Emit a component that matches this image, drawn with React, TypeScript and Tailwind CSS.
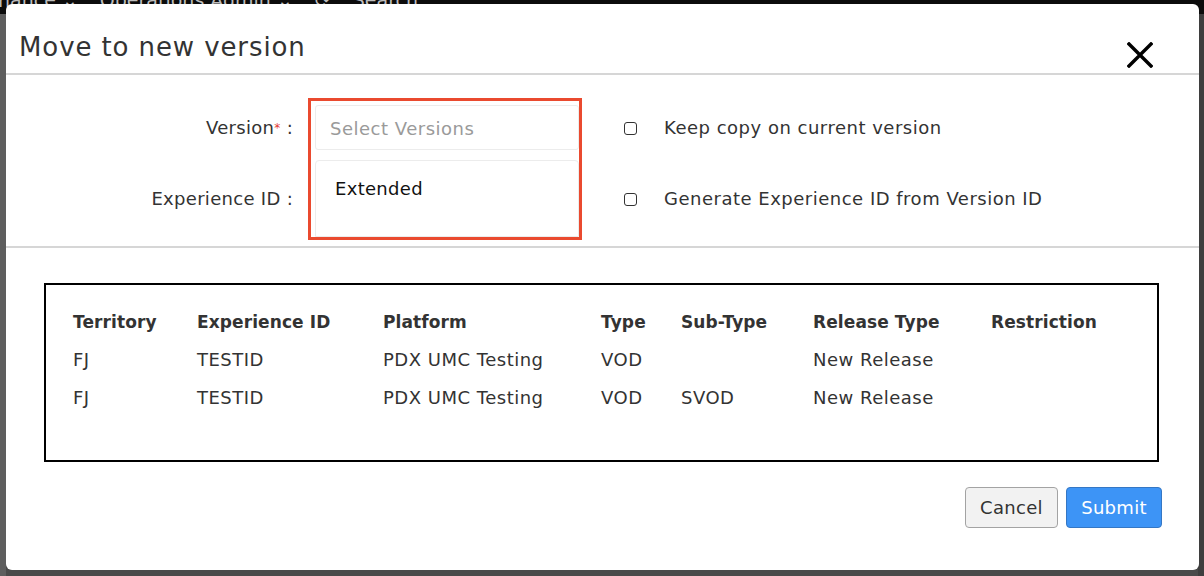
import React from "react";

const font = { fontFamily: '"DejaVu Sans", "Open Sans", sans-serif' };

function Checkbox() {
  return <span className="inline-block w-[13px] h-[13px] border-[1.5px] border-[#333] rounded-[3px] bg-white" />;
}

const cols = ["w-[124px]", "w-[186px]", "w-[218px]", "w-[80px]", "w-[132px]", "w-[178px]", "flex-1"];
const header = ["Territory", "Experience ID", "Platform", "Type", "Sub-Type", "Release Type", "Restriction"];
const rows = [
  ["FJ", "TESTID", "PDX UMC Testing", "VOD", "", "New Release", ""],
  ["FJ", "TESTID", "PDX UMC Testing", "VOD", "SVOD", "New Release", ""],
];

export default function App() {
  return (
    <div className="relative w-[1204px] h-[576px] overflow-hidden bg-[#555555] flex flex-col" style={font}>
      {/* background page */}
      <div className="h-[14px] bg-[#0c0c0c] overflow-hidden shrink-0">
        <div className="-mt-[11px] flex items-center gap-[22px] text-[19px] leading-[22px] text-[#bdbdbd] whitespace-nowrap -ml-[2px]">
          <span>nance ⌄</span>
          <span>Operations Admin ⌄</span>
          <span>⟳</span>
          <span>Search</span>
        </div>
      </div>
      <div className="flex-1 flex">
        <div className="w-[6px] bg-[#5e5e5e]" />
        <div className="flex-1 bg-[#4a4a4a]" />
        <div className="w-[6px] bg-[#3e3e3e]" />
      </div>

      {/* modal */}
      <div className="absolute left-[6px] top-[4px] w-[1193px] h-[566px] bg-white rounded-[6px] flex flex-col text-[#333]">
        <div className="h-[71px] border-b-2 border-[#d6d6d6] flex items-start justify-between pl-[13px] pr-[46px] shrink-0">
          <h2 className="mt-[27px] text-[26px] leading-[32px] text-[#333] tracking-[0.9px]">Move to new version</h2>
          <svg className="mt-[38px]" width="26" height="26" viewBox="0 0 26 26">
            <path d="M2 2 L24 24 M24 2 L2 24" stroke="#000" strokeWidth="3.4" strokeLinecap="square" />
          </svg>
        </div>

        <div className="h-[173px] border-b-2 border-[#d6d6d6] flex shrink-0">
          <div className="w-[287px] flex flex-col items-end text-[18px] leading-[24px] text-[#333] tracking-[0.3px]">
            <div className="mt-[41px]">
              Version<span className="text-[#e53935] text-[12px] align-top">*</span> :
            </div>
            <div className="mt-[47px]">Experience ID :</div>
          </div>
          <div className="ml-[15px] mt-[23px] w-[274px] h-[142px] border-[3px] border-[#ea4a2f] overflow-hidden flex flex-col">
            <div className="ml-[4px] mt-[4px] w-[264px] h-[45px] border border-[#ececec] rounded-[3px] flex items-center pl-[14px] pt-[1px] text-[18px] text-[#9a9a9a] tracking-[0.5px] shrink-0">
              Select Versions
            </div>
            <div className="ml-[4px] mt-[10px] w-[264px] flex-1 border border-[#ececec] rounded-t-[4px] pl-[19px] pt-[16px] text-[18px] leading-[24px] text-[#111] tracking-[0.3px]">
              Extended
            </div>
          </div>
          <div className="ml-[42px] flex flex-col text-[18px] leading-[24px] text-[#333] tracking-[0.5px]">
            <div className="mt-[41px] flex items-center">
              <Checkbox />
              <span className="ml-[27px]">Keep copy on current version</span>
            </div>
            <div className="mt-[47px] flex items-center">
              <Checkbox />
              <span className="ml-[27px]">Generate Experience ID from Version ID</span>
            </div>
          </div>
        </div>

        <div className="ml-[38px] mt-[35px] w-[1115px] h-[179px] border-2 border-black pl-[27px] pt-[25px] text-[18px] leading-[24px] shrink-0">
          <div className="flex font-bold text-[17px] tracking-[0.1px] text-[#333]">
            {header.map((h, i) => (
              <div key={i} className={cols[i]}>{h}</div>
            ))}
          </div>
          {rows.map((r, ri) => (
            <div key={ri} className="flex mt-[14px] text-[#333] tracking-[0.5px]">
              {r.map((c, i) => (
                <div key={i} className={cols[i]}>{c}</div>
              ))}
            </div>
          ))}
        </div>

        <div className="mt-[25px] flex justify-end gap-[8px] pr-[37px]">
          <button className="w-[93px] h-[41px] bg-[#f2f2f2] border-[1.5px] border-[#a3a3a3] rounded-[4px] text-[18px] tracking-[0.3px] text-[#333]">
            Cancel
          </button>
          <button className="w-[96px] h-[41px] bg-[#3d94f6] border-[1.5px] border-[#3577c4] rounded-[4px] text-[18px] tracking-[0.3px] text-white">
            Submit
          </button>
        </div>
      </div>
    </div>
  );
}
